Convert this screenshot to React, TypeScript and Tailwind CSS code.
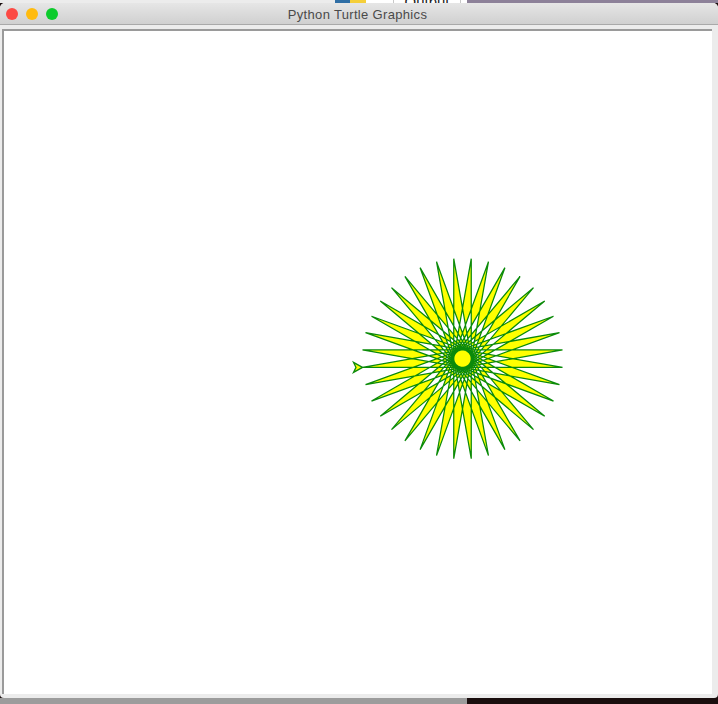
import { useMemo } from "react";

const StarDrawing = () => {
  // forward(200), left(170), 36 times, starting at the turtle's home
  const points = useMemo(() => {
    const pts: string[] = [];
    let x = 362.5;
    let y = 367.4;
    let heading = 0;
    pts.push(`${x},${y}`);
    for (let i = 0; i < 36; i++) {
      x += 200 * Math.cos((heading * Math.PI) / 180);
      y -= 200 * Math.sin((heading * Math.PI) / 180);
      pts.push(`${x.toFixed(2)},${y.toFixed(2)}`);
      heading += 170;
    }
    return pts.join(" ");
  }, []);

  return (
    <svg viewBox="4 31 708 663" className="block h-full w-full">
      <polygon points={points} fill="#ffff00" fillRule="evenodd" stroke="#0a8a0a" strokeWidth="1.25" strokeLinejoin="miter" strokeMiterlimit="1.5" />
      <polygon points="362.5,367.4 353.5,362.4 356,367.4 353.5,372.4" fill="#ffff00" stroke="#0a8a0a" strokeWidth="1.25" />
    </svg>
  );
};

const TrafficLight = ({ color }: { color: string }) => (
  <span className={`h-3 w-3 rounded-full ${color}`} />
);

export default function App() {
  return (
    <div className="flex h-[704px] w-[718px] flex-col overflow-hidden bg-[#1a0e0e] font-['Liberation_Sans',sans-serif]">
      {/* what shows above the window */}
      <div className="flex h-[3px] shrink-0 bg-white">
        <div className="w-[335px] bg-[#ececec]" />
        <div className="h-full w-[15px] bg-[#2f6ea5]" />
        <div className="h-full w-[16px] bg-[#f5cf3a]" />
        <div className="w-[27px]" />
        <div className="h-full w-px bg-[#c8c8c8]" />
        <div className="flex w-[66px] items-end justify-center overflow-hidden">
          <span className="text-[15px] leading-[3px] text-[#222]">Output</span>
        </div>
        <div className="h-full w-px bg-[#c8c8c8]" />
        <div className="ml-[6px] h-full flex-1 bg-[#8d8199]" />
      </div>

      {/* window */}
      <div className="flex h-[695px] shrink-0 flex-col overflow-hidden rounded-t-[5px] rounded-b-[4px] bg-[#ececec]">
        <div className="relative flex h-[22px] shrink-0 items-center gap-[8px] border-b border-[#a9a9a9] bg-gradient-to-b from-[#e6e6e6] to-[#d0d0d0] pl-[6px]">
          <TrafficLight color="bg-[#fc4a44]" />
          <TrafficLight color="bg-[#ffbb0e]" />
          <TrafficLight color="bg-[#0ccb2c]" />
          <span className="absolute inset-0 pr-[3px] text-center text-[13px] leading-[24px] tracking-[0.33px] text-[#4a4a4a]">Python Turtle Graphics</span>
        </div>
        <div className="flex min-h-0 flex-1 pt-[4px] pr-[6px] pb-[4px] pl-[2px]">
          <div className="min-h-0 flex-1 border-t-2 border-l-2 border-[#9a9a9a] bg-white">
            <StarDrawing />
          </div>
        </div>
      </div>

      {/* desktop below the window */}
      <div className="flex min-h-0 flex-1">
        <div className="w-[467px] bg-[#9c9c9c]" />
      </div>
    </div>
  );
}
